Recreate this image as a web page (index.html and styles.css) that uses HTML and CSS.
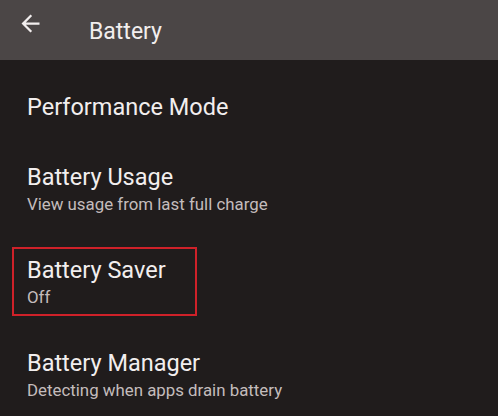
FILE: index.html
```html
<!DOCTYPE html>
<html>
<head>
<meta charset="utf-8">
<link rel="stylesheet" href="styles.css">
</head>
<body>
<div class="screen">
  <header class="appbar">
    <svg class="back" viewBox="0 0 24 24" width="27" height="27"><path d="M20 11H7.83l5.59-5.59L12 4l-8 8 8 8 1.41-1.41L7.83 13H20v-2z" fill="#f2eeee"/></svg>
    <div class="title">Battery</div>
  </header>
  <div class="list">
    <div class="item">
      <div class="item-title">Performance Mode</div>
    </div>
    <div class="item">
      <div class="item-title">Battery Usage</div>
      <div class="item-sub">View usage from last full charge</div>
    </div>
    <div class="item item-marked">
      <div class="mark">
        <div class="item-title">Battery Saver</div>
        <div class="item-sub">Off</div>
      </div>
    </div>
    <div class="item">
      <div class="item-title">Battery Manager</div>
      <div class="item-sub">Detecting when apps drain battery</div>
    </div>
  </div>
</div>
</body>
</html>
```

FILE: styles.css
```css
html, body {
  margin: 0;
  padding: 0;
  background: #201c1c;
}
body {
  font-family: Roboto, "Noto Sans", sans-serif;
  width: 498px;
  height: 416px;
  overflow: hidden;
}
.screen {
  display: flex;
  flex-direction: column;
}
.appbar {
  height: 60px;
  box-sizing: border-box;
  background: #4b4646;
  display: flex;
  align-items: flex-start;
  padding-left: 17px;
  padding-top: 10px;
}
.back {
  display: block;
  flex: none;
}
.title {
  margin-left: 45px;
  margin-top: 8px;
  font-size: 23px;
  line-height: 28px;
  color: #f2eeee;
}
.list {
  padding-top: 12px;
  display: flex;
  flex-direction: column;
}
.item {
  padding: 19px 27px;
}
.item-title {
  font-size: 23.5px;
  line-height: 32px;
  color: #f2eeee;
  white-space: nowrap;
}
.item-sub {
  font-size: 16.85px;
  line-height: 23px;
  color: #c4bcbc;
  white-space: nowrap;
}
.item-marked {
  padding: 12px 12px;
}
.mark {
  width: 185px;
  box-sizing: border-box;
  border: 2px solid #cf2129;
  padding: 5px 13px;
}
```
